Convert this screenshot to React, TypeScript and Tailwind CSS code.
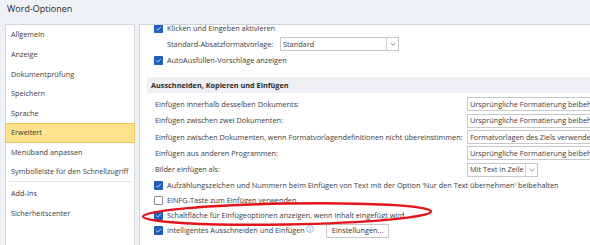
const navItems = [
  "Allgemein",
  "Anzeige",
  "Dokumentprüfung",
  "Speichern",
  "Sprache",
  "Erweitert",
  "Menüband anpassen",
  "Symbolleiste für den Schnellzugriff",
];

const pasteRows = [
  { label: "Einfügen innerhalb desselben Dokuments:", value: "Ursprüngliche Formatierung beibehalten" },
  { label: "Einfügen zwischen zwei Dokumenten:", value: "Ursprüngliche Formatierung beibehalten" },
  {
    label: "Einfügen zwischen Dokumenten, wenn Formatvorlagendefinitionen nicht übereinstimmen:",
    value: "Formatvorlagen des Ziels verwenden",
  },
  { label: "Einfügen aus anderen Programmen:", value: "Ursprüngliche Formatierung beibehalten" },
];

const Check = ({ on }: { on: boolean }) =>
  on ? (
    <span className="w-[9px] h-[9px] shrink-0 rounded-[1px] bg-[#1c5fbd] flex items-center justify-center">
      <svg width="7" height="7" viewBox="0 0 7 7">
        <path d="M1.2 3.6 L2.8 5.1 L5.9 1.8" fill="none" stroke="#cfe0f7" strokeWidth="0.9" />
      </svg>
    </span>
  ) : (
    <span className="w-[9px] h-[9px] shrink-0 rounded-[1px] bg-white border border-[#8a8a8a]" />
  );

const Arrow = () => (
  <span className="w-[12px] h-full border-l border-[#d0d0d0] flex items-center justify-center shrink-0">
    <svg width="6" height="4" viewBox="0 0 6 4">
      <path d="M0.5 0.8 L3 3.2 L5.5 0.8" fill="none" stroke="#777" strokeWidth="0.8" />
    </svg>
  </span>
);

const App = () => {
  return (
    <div
      className="relative w-[590px] h-[245px] overflow-hidden bg-[#eef2f7] text-[#3b3b3b] text-[7.3px] whitespace-nowrap"
      style={{ fontFamily: '"Open Sans", "Noto Sans", sans-serif' }}
    >
      <div className="h-[24px] pl-[7px] pt-[1px] text-[9px] text-[#1f1f1f] leading-[15px]">
        Word-Optionen
      </div>

      <div className="flex pl-[5px] gap-[4px] h-[240px]">
        {/* left navigation */}
        <div className="w-[130px] shrink-0 bg-white border border-[#d3d6da]">
          {navItems.map((n) => (
            <div
              key={n}
              className={
                n === "Erweitert"
                  ? "h-[19.6px] pl-[5px] flex items-center bg-[#fce38b] border border-[#f0c55a] -mx-[1px]"
                  : "h-[19.6px] pl-[5px] flex items-center"
              }
            >
              {n}
            </div>
          ))}
          <div className="h-[2px] mx-[3px] flex items-start">
            <div className="w-full h-[1px] bg-[#e3e3e3] mt-[-0.5px]" />
          </div>
          <div className="h-[19.6px] pl-[5px] flex items-center">Add-Ins</div>
          <div className="h-[19.6px] pl-[5px] flex items-center">Sicherheitscenter</div>
        </div>

        {/* right content */}
        <div className="flex-1 bg-white border-l border-t border-[#cfd2d6] overflow-hidden">
          <div className="-mt-[5px]">
            <div className="h-[16px] pl-[14px] flex items-center gap-[4px]">
              <Check on />
              <span>Klicken und Eingeben aktivieren</span>
            </div>
            <div className="h-[16px] pl-[27px] flex items-center">
              <span className="w-[113px] shrink-0">Standard-Absatzformatvorlage:</span>
              <div className="w-[119px] h-[14px] border border-[#c8c8c8] flex items-center justify-between">
                <span className="pl-[2px]">Standard</span>
                <Arrow />
              </div>
            </div>
            <div className="h-[16px] pl-[14px] flex items-center gap-[4px]">
              <Check on />
              <span>AutoAusfüllen-Vorschläge anzeigen</span>
            </div>

            <div className="mt-[9px] ml-[7px] h-[16px] bg-[#eff0f3] pl-[4px] flex items-center font-bold text-[#2a2a2a]">
              Ausschneiden, Kopieren und Einfügen
            </div>

            <div className="mt-[3px] pl-[15px]">
              {pasteRows.map((r, i) => (
                <div key={i} className="h-[16.4px] flex items-center">
                  <span className="w-[312px] shrink-0">{r.label}</span>
                  <div className="w-[150px] h-[14px] shrink-0 border border-[#c8c8c8] flex items-center pl-[2px]">
                    {r.value}
                  </div>
                </div>
              ))}
              <div className="h-[16.4px] flex items-center">
                <span className="w-[312px] shrink-0">Bilder einfügen als:</span>
                <div className="w-[71px] h-[14px] shrink-0 border border-[#c8c8c8] flex items-center justify-between">
                  <span className="pl-[2px]">Mit Text in Zeile</span>
                  <Arrow />
                </div>
              </div>
            </div>

            <div className="pl-[14px]">
              <div className="h-[15px] flex items-center gap-[4px]">
                <Check on />
                <span>
                  Aufzählungszeichen und Nummern beim Einfügen von Text mit der Option 'Nur den Text übernehmen'
                  beibehalten
                </span>
              </div>
              <div className="h-[15px] flex items-center gap-[4px]">
                <Check on={false} />
                <span>EINFG-Taste zum Einfügen verwenden</span>
              </div>
              <div className="h-[15px] flex items-center gap-[4px]">
                <Check on />
                <span>Schaltfläche für Einfügeoptionen anzeigen, wenn Inhalt eingefügt wird</span>
              </div>
              <div className="h-[16px] flex items-center gap-[4px]">
                <Check on />
                <span>Intelligentes Ausschneiden und Einfügen</span>
                <svg width="8" height="8" viewBox="0 0 8 8" className="-ml-[3px] -mt-[4px]">
                  <circle cx="4" cy="4" r="3.4" fill="none" stroke="#6f9ad8" strokeWidth="0.7" />
                  <path d="M4 3.4 V6" stroke="#6f9ad8" strokeWidth="0.8" />
                  <circle cx="4" cy="2.3" r="0.45" fill="#6f9ad8" />
                </svg>
                <div className="ml-[8px] h-[14px] px-[5px] border border-[#c8c8c8] flex items-center text-[#333]">
                  Einstellungen...
                </div>
              </div>
            </div>
          </div>
        </div>
      </div>

      {/* red annotation ellipse */}
      <svg className="absolute left-0 top-0 pointer-events-none" width="590" height="245">
        <ellipse
          cx="287"
          cy="214"
          rx="144"
          ry="10.5"
          transform="rotate(-1 287 214)"
          fill="none"
          stroke="#e3141c"
          strokeWidth="2.4"
        />
      </svg>
    </div>
  );
};

export default App;
